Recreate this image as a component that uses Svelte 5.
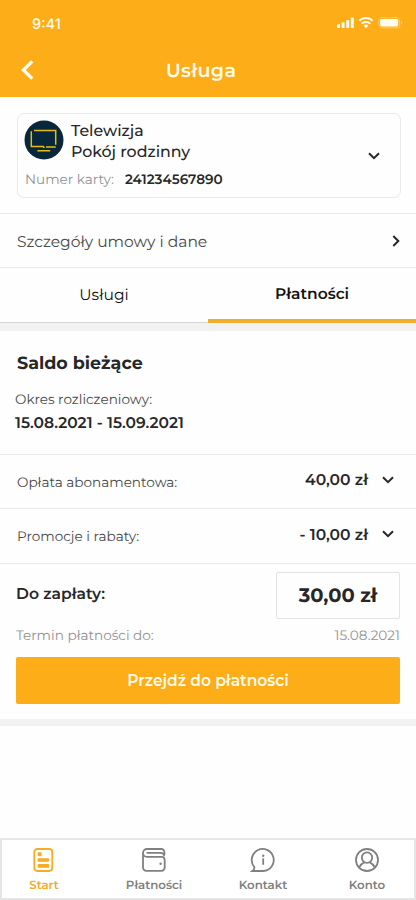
<script lang="ts">
    const charges = [
        { label: "Opłata abonamentowa:", amount: "40,00 zł" },
        { label: "Promocje i rabaty:", amount: "- 10,00 zł" },
    ];
</script>

{#snippet chevron()}
    <svg class="chevron" width="12" height="8" viewBox="0 0 12 8">
        <path d="M1 1.2 6 6.2 11 1.2" />
    </svg>
{/snippet}

<div class="screen">
    <header>
        <div class="status">
            <span class="time">9:41</span>
            <svg width="66" height="12" viewBox="0 0 66 12">
                <rect x="0" y="7.3" width="3" height="3.7" rx="0.8" />
                <rect x="4.6" y="5.3" width="3" height="5.7" rx="0.8" />
                <rect x="9.2" y="2.9" width="3" height="8.1" rx="0.8" />
                <rect x="13.8" y="0.5" width="3" height="10.5" rx="0.8" />
                <g class="wifi">
                    <path d="M22.3 3.8a9.6 9.6 0 0 1 13.4 0" />
                    <path d="M24.8 6.6a6 6 0 0 1 8.4 0" />
                </g>
                <path d="M26.6 8.7a3.5 3.5 0 0 1 4.8 0L29 11.2z" />
                <rect class="shell" x="41.9" y="0.6" width="20.8" height="10.2" rx="2.6" />
                <rect x="43.2" y="2" width="18" height="7.4" rx="1.3" />
                <path class="tip" d="M64 4v3.6q1.5-.5 1.5-1.8T64 4z" />
            </svg>
        </div>
        <div class="title-bar">
            <svg width="14" height="20" viewBox="0 0 14 20">
                <path d="M12.2 1.4 3.4 10 12.2 18.6" />
            </svg>
            <h1>Usługa</h1>
        </div>
    </header>

    <section class="device">
        <div class="device-info">
            <div class="device-head">
                <svg width="40" height="40" viewBox="0 0 40 40">
                    <circle cx="20" cy="20" r="19.5" />
                    <path d="M10 10.5H31.7V24.8M7.3 11.2V26.6H19.3L20.3 28M22 26.9H31.7M13.4 30.7H26.2" />
                </svg>
                <div class="device-name">
                    <div class="kind">Telewizja</div>
                    <div class="room">Pokój rodzinny</div>
                </div>
            </div>
            <div class="card-number">
                <span>Numer karty:</span>
                <strong>241234567890</strong>
            </div>
        </div>
        {@render chevron()}
    </section>

    <div class="details">
        <span>Szczegóły umowy i dane</span>
        <svg class="chevron" width="8" height="12" viewBox="0 0 8 12">
            <path d="M1.3 1 6.3 6 1.3 11" />
        </svg>
    </div>

    <nav class="tabs">
        <span class="tab">Usługi</span>
        <span class="tab active">Płatności</span>
    </nav>
    <div class="band"></div>

    <section class="balance">
        <h2>Saldo bieżące</h2>
        <div class="period">Okres rozliczeniowy:</div>
        <div class="dates">15.08.2021 - 15.09.2021</div>
    </section>

    {#each charges as charge}
        <div class="charge">
            <span class="label">{charge.label}</span>
            <span class="amount">{charge.amount}</span>
            {@render chevron()}
        </div>
    {/each}

    <section class="payment">
        <div class="total">
            <span class="due">Do zapłaty:</span>
            <span class="sum">30,00 zł</span>
        </div>
        <div class="deadline">
            <span class="until">Termin płatności do:</span>
            <span class="date">15.08.2021</span>
        </div>
        <button><span>Przejdź do płatności</span></button>
    </section>
    <div class="band"></div>

    <nav class="bottom">
        <div class="item start">
            <svg width="26" height="26" viewBox="0 0 26 26">
                <rect x="3.3" y="2" width="18" height="22" rx="3.2" />
                <g class="solid">
                    <rect x="6.6" y="5.3" width="4" height="4" rx="1" />
                    <rect x="6.6" y="11.2" width="11.5" height="3.5" rx="0.8" />
                    <rect x="6.6" y="17" width="11.5" height="3.7" rx="0.8" />
                </g>
            </svg>
            <span>Start</span>
        </div>
        <div class="item payments">
            <svg width="26" height="26" viewBox="0 0 26 26">
                <path d="M23.4 8V5.2a3.2 3.2 0 0 0-3.2-3.2H6a4 4 0 0 0-4 4v14.5A3.3 3.3 0 0 0 5.3 23.8H20.4a3.3 3.3 0 0 0 3.3-3.3V13a3.2 3.2 0 0 0-3.2-3.2H5.8A3.8 3.8 0 0 1 2 6" />
                <path d="M5.6 5.8H19.5a3.7 3.7 0 0 1 3.7 3.5" />
                <circle class="solid" cx="19.6" cy="16.8" r="1.2" />
            </svg>
            <span>Płatności</span>
        </div>
        <div class="item contact">
            <svg width="26" height="26" viewBox="0 0 26 26">
                <path d="M13.3 24H2.4q2.1-1.7 2-3.8A11 11 0 1 1 13.3 24z" />
                <path d="M13.2 11.3V17.8" />
                <circle class="solid" cx="13.2" cy="8.7" r="1.2" />
            </svg>
            <span>Kontakt</span>
        </div>
        <div class="item account">
            <svg width="26" height="26" viewBox="0 0 26 26">
                <circle cx="13" cy="13" r="11" />
                <circle cx="13" cy="10.6" r="5.2" />
                <path d="M5.2 20.4Q7.3 16.6 10.3 15.4M15.7 15.4Q18.7 16.6 20.8 20.4" />
            </svg>
            <span>Konto</span>
        </div>
    </nav>
</div>

<style>
    :global(body) {
        margin: 0;
        background: #fefefe;
    }

    .screen {
        display: flex;
        flex-direction: column;
        width: 416px;
        height: 900px;
        overflow: hidden;
        box-sizing: border-box;
        font-family: Montserrat, Inter, "Open Sans", sans-serif;
        color: #272727;
        white-space: nowrap;
        text-rendering: geometricPrecision;
    }

    .screen * {
        box-sizing: border-box;
    }

    svg {
        display: block;
        flex: none;
    }

    header {
        height: 97px;
        background: #fcad18;
        color: #fffbe8;
    }

    .status {
        display: flex;
        justify-content: space-between;
        padding: 16px 13px 0 32px;
        height: 46px;
    }

    .status svg {
        margin-top: 1px;
        fill: #fffdf0;
    }

    .status .wifi {
        fill: none;
        stroke: #fffdf0;
        stroke-width: 2;
    }

    .status .shell {
        fill: none;
        stroke: #fdcc70;
        stroke-width: 1;
    }

    .status .tip {
        fill: #fdcc70;
    }

    .time {
        font-family: Inter, sans-serif;
        font-size: 14.5px;
        font-weight: 500;
        line-height: 17px;
    }

    .title-bar {
        display: grid;
        grid-template-columns: 14px 1fr 14px;
        align-items: center;
        padding: 0 34px 0 20px;
        height: 48px;
    }

    .title-bar path {
        fill: none;
        stroke: #fffdf0;
        stroke-width: 3.4;
    }

    h1 {
        margin: 0;
        text-align: center;
        font-size: 19px;
        font-weight: 600;
        letter-spacing: 0.4px;
    }

    .chevron {
        fill: none;
        stroke: #272727;
        stroke-width: 2;
    }

    .device {
        display: flex;
        align-items: center;
        justify-content: space-between;
        margin: 16px 15px 15px 17px;
        padding: 0 20px 0 6px;
        height: 85px;
        border: 1px solid #e9e9e9;
        border-radius: 7px;
    }

    .device .chevron {
        margin-top: 1px;
    }

    .device-info {
        align-self: flex-start;
    }

    .device-head {
        display: flex;
        gap: 7px;
        padding-top: 6px;
    }

    .device-head circle {
        fill: #08273b;
    }

    .device-head path {
        fill: none;
        stroke: #e5bd16;
        stroke-width: 1.5;
    }

    .device-name {
        font-size: 15.8px;
        font-weight: 500;
        line-height: 21px;
    }

    .card-number {
        display: flex;
        gap: 11px;
        margin: 8px 0 0 1px;
        font-size: 13.6px;
        line-height: 20px;
        color: #929292;
    }

    .card-number strong {
        font-weight: 600;
        color: #272727;
    }

    .details {
        display: flex;
        align-items: center;
        justify-content: space-between;
        height: 55px;
        padding: 1px 16px 0 17px;
        border-top: 1px solid #e9e9e9;
        border-bottom: 1px solid #e9e9e9;
        font-size: 15.5px;
        color: #4a4a4a;
    }

    .tabs {
        display: grid;
        grid-template-columns: 1fr 1fr;
        height: 55px;
        font-size: 15.5px;
        line-height: 51px;
        text-align: center;
        color: #111;
    }

    .tab {
        padding-top: 1px;
        border-bottom: 1px solid #d5d5d5;
    }

    .tab.active {
        padding-top: 0;
        border-bottom: 4px solid #f0ae2c;
        font-weight: 600;
    }

    .band {
        flex: none;
        height: 7.5px;
        background: #f2f2f2;
    }

    .balance {
        height: 123.5px;
        padding: 21px 15px 0;
    }

    h2 {
        margin: 0 0 13px 2px;
        font-size: 17.5px;
        line-height: 24px;
        font-weight: 700;
    }

    .period {
        font-size: 13.6px;
        line-height: 23px;
        color: #4a4a4a;
    }

    .dates {
        font-size: 15.5px;
        line-height: 22px;
        font-weight: 600;
    }

    .charge {
        display: flex;
        align-items: center;
        height: 54.4px;
        padding: 0 22px 4px 17px;
        border-top: 1px solid #e9e9e9;
    }

    .charge .label {
        padding-top: 6px;
        font-size: 13.6px;
        color: #4a4a4a;
    }

    .charge .amount {
        margin-left: auto;
        margin-right: 14px;
        font-size: 15.6px;
        font-weight: 600;
    }

    .payment {
        height: 156.2px;
        padding: 8px 16px 0;
        border-top: 1px solid #e9e9e9;
    }

    .total {
        display: flex;
        justify-content: space-between;
        height: 47px;
        font-weight: 600;
        font-size: 15.6px;
        line-height: 43px;
    }

    .sum {
        width: 124px;
        border: 1px solid #e3e3e3;
        border-radius: 2px;
        text-align: center;
        font-size: 19.5px;
        font-weight: 700;
        line-height: 45px;
    }

    .deadline {
        display: flex;
        justify-content: space-between;
        height: 38px;
        font-size: 13.6px;
        line-height: 35px;
        color: #929292;
    }

    button {
        display: block;
        width: 100%;
        height: 47px;
        border: 0;
        border-radius: 2px;
        background: #fcad18;
        color: #fffbe8;
        font-family: inherit;
        font-size: 15.5px;
        font-weight: 600;
    }

    .bottom {
        display: grid;
        grid-template-columns: 100px 104px 114px 1fr;
        height: 62px;
        margin-top: auto;
        border: 2px solid #e6e6e6;
        background: #fff;
        font-size: 11.8px;
        line-height: 15px;
        font-weight: 600;
        color: #808080;
    }

    .item {
        display: flex;
        flex-direction: column;
        align-items: center;
        gap: 5px;
        padding-top: 7px;
    }

    .item svg {
        fill: none;
        stroke: currentColor;
        stroke-width: 1.8;
    }

    .item .solid {
        fill: currentColor;
        stroke: none;
    }

    .item.start {
        padding-right: 16px;
        color: #f5ab25;
    }
</style>
